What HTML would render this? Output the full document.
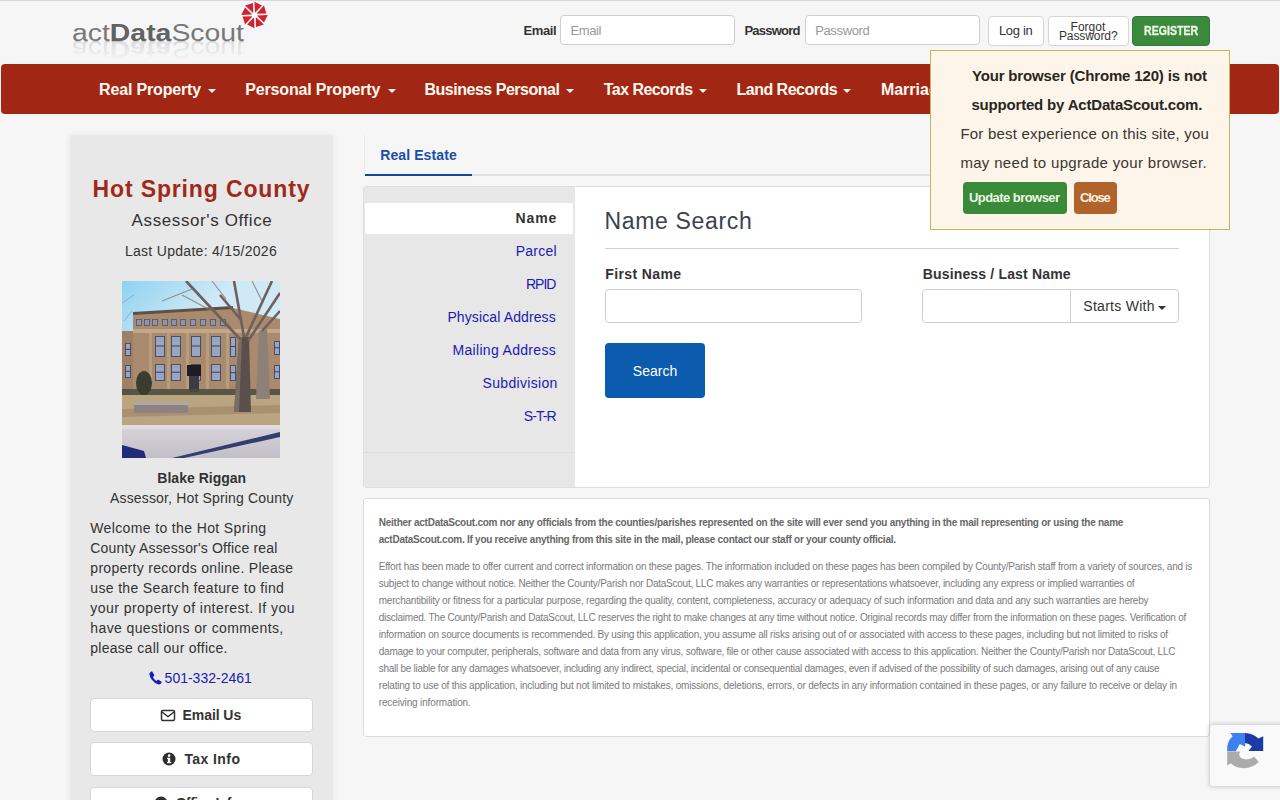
<!DOCTYPE html>
<html><head><meta charset="utf-8"><title>actDataScout</title>
<style>

html,body{margin:0;padding:0;}
body{width:1280px;height:800px;overflow:hidden;position:relative;background:#f6f6f6;font-family:"Liberation Sans",sans-serif;}
.b{position:absolute;box-sizing:border-box;}
.topline{left:0;top:0;width:1280px;height:1px;background:#ded4d7;}
.inp{background:#fff;border:1px solid #cfcfcf;border-radius:4px;}
.btnw{background:#fff;border:1px solid #d6d6d6;border-radius:4px;}
.nav{left:1px;top:64px;width:1278px;height:50px;background:#a12714;border-radius:4px;}
.caret{position:absolute;width:0;height:0;border-left:4px solid transparent;border-right:4px solid transparent;border-top:4px solid #fff8f0;}
.side{left:70px;top:135px;width:263px;height:700px;background:#e8e8e8;border-radius:3px;box-shadow:0 0 6px rgba(0,0,0,0.07);}
.panel{left:363px;top:186px;width:847px;height:302px;background:#fff;border:1px solid #dedede;border-radius:3px;overflow:hidden;}
.lcol{left:0;top:0;width:211px;height:302px;background:#e7e7e7;}
.disc{left:363px;top:498px;width:847px;height:239px;background:#fff;border:1px solid #dcdcdc;border-radius:3px;}
.popup{left:930px;top:50px;width:300px;height:180px;background:#fdf5ea;border:1px solid #c2b55c;z-index:10;}

.t{position:absolute;white-space:pre;line-height:1;font-family:"Liberation Sans",sans-serif;}
</style></head><body>

<div class="b topline"></div>
<!-- logo -->
<div class="b" style="left:66px;top:0;width:210px;height:62px;">
 <svg width="210" height="62" viewBox="0 0 210 62">
  <defs>
   <linearGradient id="rg" x1="0" y1="0" x2="0" y2="1">
    <stop offset="0" stop-color="#f6f6f6" stop-opacity="0.5"/>
    <stop offset="1" stop-color="#f6f6f6" stop-opacity="1"/>
   </linearGradient>
  </defs>
  <text x="6" y="41" font-family="Liberation Sans" font-size="23" fill="#787878" textLength="172" lengthAdjust="spacingAndGlyphs"><tspan>act</tspan><tspan font-weight="bold" fill="#626262">Data</tspan><tspan>Scout</tspan></text>
  <filter id="lb" x="-0.1" y="-0.3" width="1.2" height="1.6"><feGaussianBlur stdDeviation="0.7"/></filter><g transform="translate(0,82) scale(1,-1)" filter="url(#lb)">
   <text x="6" y="41" font-family="Liberation Sans" font-size="23" fill="#c4c4c4" textLength="172" lengthAdjust="spacingAndGlyphs"><tspan>act</tspan><tspan font-weight="bold">Data</tspan><tspan>Scout</tspan></text>
  </g>
  <rect x="0" y="42" width="210" height="20" fill="url(#rg)"/>
  <g transform="translate(188.5,15)"><polygon points="0.00,-13.30 7.39,-9.46 0.50,-2.35" fill="#d3222f"/><polygon points="9.40,-9.40 11.91,-1.46 2.01,-1.31" fill="#d3222f"/><polygon points="13.30,-0.00 9.46,7.39 2.35,0.50" fill="#d3222f"/><polygon points="9.40,9.40 1.46,11.91 1.31,2.01" fill="#d3222f"/><polygon points="0.00,13.30 -7.39,9.46 -0.50,2.35" fill="#d3222f"/><polygon points="-9.40,9.40 -11.91,1.46 -2.01,1.31" fill="#d3222f"/><polygon points="-13.30,0.00 -9.46,-7.39 -2.35,-0.50" fill="#d3222f"/><polygon points="-9.40,-9.40 -1.46,-11.91 -1.31,-2.01" fill="#d3222f"/><circle r="2.6" fill="#fff"/></g>
 </svg>
</div>
<!-- header form -->
<div class="b inp" style="left:560px;top:15px;width:175px;height:30px;"></div>
<div class="b inp" style="left:805px;top:15px;width:175px;height:30px;"></div>
<div class="b btnw" style="left:988px;top:16px;width:56px;height:30px;"></div>
<div class="b btnw" style="left:1048px;top:16px;width:81px;height:30px;"></div>
<div class="b" style="left:1132px;top:16px;width:78px;height:30px;background:#3b8a3b;border:1px solid #32783a;border-radius:4px;"></div>
<!-- nav -->
<div class="b nav"></div>
<div class="caret" style="left:208px;top:89px;"></div>
<div class="caret" style="left:388px;top:89px;"></div>
<div class="caret" style="left:566px;top:89px;"></div>
<div class="caret" style="left:699px;top:89px;"></div>
<div class="caret" style="left:843px;top:89px;"></div>
<!-- sidebar -->
<div class="b side"></div>
<div class="b" id="photo" style="left:122px;top:281px;width:158px;height:177px;overflow:hidden;background:#b9a27f;"><svg width="158" height="177" viewBox="0 0 158 177"><filter id="pb" x="0" y="0" width="1" height="1"><feGaussianBlur stdDeviation="0.6"/></filter><g filter="url(#pb)"><defs><linearGradient id="sky" x1="0" y1="0" x2="0.3" y2="0.35"><stop offset="0" stop-color="#8fd2f2"/><stop offset="1" stop-color="#cfe9f6"/></linearGradient><linearGradient id="walk" x1="0" y1="0" x2="0" y2="1"><stop offset="0" stop-color="#d8d4da"/><stop offset="1" stop-color="#c2bfc8"/></linearGradient></defs><rect width="158" height="177" fill="url(#sky)"/><path d="M0 22 L12 14 M2 40 L10 30" stroke="#7f98a8" stroke-width="1" opacity="0.6"/><rect x="0" y="50" width="30" height="66" fill="#9e8066"/><path d="M11 33 L111 27 L158 38 L158 116 L11 116 Z" fill="#a98a6c"/><path d="M11 31 L111 25 L111 28 L11 34 Z" fill="#5e5048"/><rect x="11" y="48" width="147" height="4" fill="#c2a888"/><rect x="14" y="38" width="6" height="7" fill="#5a6072"/><rect x="15" y="39" width="4" height="5" fill="#8894b0"/><rect x="22" y="38" width="6" height="7" fill="#5a6072"/><rect x="23" y="39" width="4" height="5" fill="#8894b0"/><rect x="30" y="38" width="6" height="7" fill="#5a6072"/><rect x="31" y="39" width="4" height="5" fill="#8894b0"/><rect x="40" y="38" width="6" height="7" fill="#5a6072"/><rect x="41" y="39" width="4" height="5" fill="#8894b0"/><rect x="49" y="38" width="6" height="7" fill="#5a6072"/><rect x="50" y="39" width="4" height="5" fill="#8894b0"/><rect x="58" y="38" width="6" height="7" fill="#5a6072"/><rect x="59" y="39" width="4" height="5" fill="#8894b0"/><rect x="68" y="38" width="6" height="7" fill="#5a6072"/><rect x="69" y="39" width="4" height="5" fill="#8894b0"/><rect x="78" y="38" width="6" height="7" fill="#5a6072"/><rect x="79" y="39" width="4" height="5" fill="#8894b0"/><rect x="88" y="38" width="6" height="7" fill="#5a6072"/><rect x="89" y="39" width="4" height="5" fill="#8894b0"/><rect x="98" y="38" width="6" height="7" fill="#5a6072"/><rect x="99" y="39" width="4" height="5" fill="#8894b0"/><rect x="33" y="55" width="10" height="21" fill="#4a5064"/><rect x="34" y="56" width="8" height="19" fill="#98a6c4"/><rect x="33" y="64.5" width="10" height="1" fill="#3e4454"/><rect x="33" y="83" width="10" height="17" fill="#4a5064"/><rect x="34" y="84" width="8" height="15" fill="#98a6c4"/><rect x="33" y="90.7" width="10" height="1" fill="#3e4454"/><rect x="49" y="55" width="10" height="21" fill="#4a5064"/><rect x="50" y="56" width="8" height="19" fill="#98a6c4"/><rect x="49" y="64.5" width="10" height="1" fill="#3e4454"/><rect x="49" y="83" width="10" height="17" fill="#4a5064"/><rect x="50" y="84" width="8" height="15" fill="#98a6c4"/><rect x="49" y="90.7" width="10" height="1" fill="#3e4454"/><rect x="69" y="55" width="10" height="21" fill="#4a5064"/><rect x="70" y="56" width="8" height="19" fill="#98a6c4"/><rect x="69" y="64.5" width="10" height="1" fill="#3e4454"/><rect x="69" y="83" width="10" height="17" fill="#4a5064"/><rect x="70" y="84" width="8" height="15" fill="#98a6c4"/><rect x="69" y="90.7" width="10" height="1" fill="#3e4454"/><rect x="89" y="55" width="10" height="21" fill="#4a5064"/><rect x="90" y="56" width="8" height="19" fill="#98a6c4"/><rect x="89" y="64.5" width="10" height="1" fill="#3e4454"/><rect x="89" y="83" width="10" height="17" fill="#4a5064"/><rect x="90" y="84" width="8" height="15" fill="#98a6c4"/><rect x="89" y="90.7" width="10" height="1" fill="#3e4454"/><rect x="108" y="56" width="6" height="20" fill="#4a5064"/><rect x="109" y="57" width="4" height="18" fill="#98a6c4"/><rect x="108" y="65.0" width="6" height="1" fill="#3e4454"/><rect x="108" y="84" width="6" height="16" fill="#4a5064"/><rect x="109" y="85" width="4" height="14" fill="#98a6c4"/><rect x="108" y="91.2" width="6" height="1" fill="#3e4454"/><rect x="3" y="62" width="6" height="13" fill="#4a5064"/><rect x="4" y="63" width="4" height="11" fill="#98a6c4"/><rect x="3" y="67.8" width="6" height="1" fill="#3e4454"/><rect x="3" y="84" width="6" height="13" fill="#4a5064"/><rect x="4" y="85" width="4" height="11" fill="#98a6c4"/><rect x="3" y="89.8" width="6" height="1" fill="#3e4454"/><rect x="152" y="60" width="6" height="14" fill="#4a5064"/><rect x="153" y="61" width="4" height="12" fill="#98a6c4"/><rect x="152" y="66.3" width="6" height="1" fill="#3e4454"/><rect x="152" y="84" width="6" height="14" fill="#4a5064"/><rect x="153" y="85" width="4" height="12" fill="#98a6c4"/><rect x="152" y="90.3" width="6" height="1" fill="#3e4454"/><rect x="27" y="52" width="3" height="62" fill="#c0a484" opacity="0.7"/><rect x="45" y="52" width="3" height="62" fill="#c0a484" opacity="0.7"/><rect x="64" y="52" width="3" height="62" fill="#c0a484" opacity="0.7"/><rect x="84" y="52" width="3" height="62" fill="#c0a484" opacity="0.7"/><rect x="104" y="52" width="3" height="62" fill="#c0a484" opacity="0.7"/><rect x="65" y="84" width="14" height="11" fill="#1e1e22"/><rect x="67" y="95" width="10" height="16" fill="#3a3a44"/><rect x="0" y="108" width="158" height="8" fill="#4a4a40" opacity="0.85"/><ellipse cx="22" cy="102" rx="8" ry="12" fill="#3a3a30"/><rect x="0" y="114" width="158" height="31" fill="#bba581"/><path d="M0 128 L158 124 L158 132 L0 136 Z" fill="#9c8466" opacity="0.6"/><rect x="12" y="121" width="54" height="11" fill="#8c8282"/><rect x="12" y="121" width="54" height="3" fill="#b0a8a6"/><path d="M134 118 L137 50 L145 48 L148 118 Z" fill="#8c8078"/><path d="M112 131 L117 56 L127 56 L129 131 Z" fill="#5a504c"/><path d="M112 131 L117 56 L120 56 L117 131 Z" fill="#857870" opacity="0.7"/><path d="M118 58 L64 0 M122 56 L112 0 M124 56 L150 0 M126 60 L158 12 M120 40 L98 14 M140 50 L158 30" stroke="#6e605c" stroke-width="2.6" fill="none"/><path d="M90 30 L60 14 M104 18 L90 0 M140 20 L130 0 M70 8 L40 20" stroke="#8a7a78" stroke-width="1.2" fill="none" opacity="0.8"/><rect x="0" y="144" width="158" height="33" fill="url(#walk)"/><rect x="0" y="144" width="158" height="4" fill="#e0dce2"/><path d="M50 177 L158 151 L158 156 L62 177 Z" fill="#343c70"/><path d="M0 164 L22 170 L24 177 L0 177 Z" fill="#232a7a"/></g></svg></div>
<div class="b btnw" style="left:90px;top:698px;width:223px;height:34px;"></div>
<div class="b btnw" style="left:90px;top:742px;width:223px;height:34px;"></div>
<div class="b btnw" style="left:90px;top:787px;width:223px;height:34px;"></div>
<!-- tabs -->
<div class="b" style="left:472px;top:174px;width:738px;height:2px;background:#e0e0e0;"></div>
<div class="b" style="left:364px;top:135px;width:1px;height:40px;background:#e9e9e9;"></div>
<div class="b" style="left:365px;top:174px;width:107px;height:2px;background:#0d47a1;"></div>
<!-- main panel -->
<div class="b panel">
 <div class="b lcol"></div>
 <div class="b" style="left:1px;top:16px;width:208px;height:31px;background:#fff;border-radius:2px;"></div>
 <div class="b" style="left:0;top:265px;width:211px;height:1px;background:#dcdcdc;"></div>
</div>
<div class="b" style="left:605px;top:248px;width:574px;height:1px;background:#d0d0d0;"></div>
<div class="b inp" style="left:605px;top:289px;width:257px;height:34px;"></div>
<div class="b inp" style="left:922px;top:289px;width:257px;height:34px;"></div>
<div class="b" style="left:1070px;top:290px;width:1px;height:32px;background:#d0d0d0;"></div>
<div class="caret" style="left:1158px;top:306px;border-top-color:#333;border-left-width:4px;border-right-width:4px;"></div>
<div class="b" style="left:605px;top:343px;width:100px;height:55px;background:#0b5bae;border-radius:4px;"></div>
<!-- disclaimer -->
<div class="b disc"></div>
<!-- popup -->
<div class="b popup"></div>
<div class="b" style="left:963px;top:182px;width:104px;height:32px;background:#3b8a3a;border-radius:4px;z-index:11;"></div>
<div class="b" style="left:1074px;top:182px;width:43px;height:32px;background:#b0632a;border-radius:4px;z-index:11;"></div>

<!-- icons -->
<svg class="b" style="left:149px;top:671px;" width="13" height="14" viewBox="0 0 13 14"><path d="M3.2 0.6 L5.2 3.8 Q5.5 4.4 5 4.9 L3.9 5.9 Q4.9 8.6 7.3 10.1 L8.4 9 Q8.9 8.5 9.5 8.8 L12.5 10.8 Q12.9 11.2 12.6 11.7 L11.4 13.1 Q10.8 13.7 9.8 13.5 Q5.5 12.4 2.6 8.4 Q0.6 5.5 0.4 3.2 Q0.3 2.3 0.9 1.7 L2.3 0.5 Q2.8 0.1 3.2 0.6 Z" fill="#1b1bc8"/></svg>
<svg class="b" style="left:160px;top:709px;" width="16" height="13" viewBox="0 0 16 13"><rect x="1.5" y="1.5" width="13" height="10" rx="1.2" fill="none" stroke="#333" stroke-width="1.5"/><path d="M2 3 L8 7.6 L14 3" fill="none" stroke="#333" stroke-width="1.5"/></svg>
<svg class="b" style="left:162px;top:752px;" width="14" height="14" viewBox="0 0 14 14"><circle cx="7" cy="7" r="6.5" fill="#2d2d2d"/><rect x="5.9" y="5.8" width="2.3" height="5" fill="#fff"/><rect x="5" y="10" width="4.2" height="1.2" fill="#fff"/><rect x="5" y="5.8" width="2" height="1.1" fill="#fff"/><circle cx="7.1" cy="3.6" r="1.3" fill="#fff"/></svg>
<svg class="b" style="left:154px;top:796px;" width="14" height="14" viewBox="0 0 14 14"><circle cx="7" cy="7" r="6.5" fill="#2d2d2d"/></svg>
<svg class="b" style="left:1222px;top:728px;z-index:21;" width="46" height="46" viewBox="0 0 46 46">
 <path d="M5.2 23.3 L5.2 19 Q6 12.5 10.6 8.2 L8.4 4.9 L23.2 4.9 L23.2 18.8 L17.8 16 L13.8 23.3 Z" fill="#3f80ec"/>
 <path d="M23 4.9 Q31 5 36.4 10.6 L41.2 8.2 L41.2 22.9 L26.4 22.9 L30 18.4 Q27 15.4 23 15 Z" fill="#1c3aa6"/>
 <path d="M5.2 23.5 L18.4 23.5 Q15.6 27 19 30 Q25.5 33.3 32.2 28.8 L36.8 33.9 Q30 40.6 21 40.1 Q13 39.6 9 35.2 L5.2 37.6 Z" fill="#ababab"/>
</svg>

<!-- recaptcha -->
<div class="b" style="left:1210px;top:725px;width:80px;height:61px;background:#f9f9f9;border-radius:3px;box-shadow:0 0 4px 1px rgba(0,0,0,0.18);z-index:20;"></div>

<div class="t" id="h_email" style="left:523.50px;top:24.00px;font-size:13px;font-weight:bold;color:#333;letter-spacing:-0.393px;">Email</div><div class="t" id="h_emailph" style="left:570.50px;top:24.00px;font-size:13px;font-weight:normal;color:#999;letter-spacing:-0.430px;">Email</div><div class="t" id="h_pw" style="left:744.40px;top:24.00px;font-size:13px;font-weight:bold;color:#333;letter-spacing:-0.753px;">Password</div><div class="t" id="h_pwph" style="left:815.20px;top:24.00px;font-size:13px;font-weight:normal;color:#999;letter-spacing:-0.364px;">Password</div><div class="t" id="h_login" style="left:998.90px;top:24.30px;font-size:13px;font-weight:normal;color:#333;letter-spacing:-0.318px;">Log in</div><div class="t" id="h_forgot1" style="left:1070.60px;top:20.64px;font-size:12px;font-weight:normal;color:#333;letter-spacing:0.010px;">Forgot</div><div class="t" id="h_forgot2" style="left:1058.90px;top:29.64px;font-size:12px;font-weight:normal;color:#333;letter-spacing:-0.086px;">Password?</div><div class="t" id="h_reg" style="left:1143.80px;top:24.30px;font-size:13px;font-weight:bold;color:#eef5e6;letter-spacing:0.000px;transform:scaleX(0.8156);transform-origin:0.00px 0;-webkit-text-stroke:0.35px #eef5e6;">REGISTER</div><div class="t" id="n1" style="left:99.00px;top:81.96px;font-size:16px;font-weight:bold;color:#fff8f0;letter-spacing:-0.158px;">Real Property</div><div class="t" id="n2" style="left:245.25px;top:81.96px;font-size:16px;font-weight:bold;color:#fff8f0;letter-spacing:-0.167px;">Personal Property</div><div class="t" id="n3" style="left:424.50px;top:81.96px;font-size:16px;font-weight:bold;color:#fff8f0;letter-spacing:-0.483px;">Business Personal</div><div class="t" id="n4" style="left:603.75px;top:81.96px;font-size:16px;font-weight:bold;color:#fff8f0;letter-spacing:-0.545px;">Tax Records</div><div class="t" id="n5" style="left:736.50px;top:81.96px;font-size:16px;font-weight:bold;color:#fff8f0;letter-spacing:-0.508px;">Land Records</div><div class="t" id="n6" style="left:880.90px;top:81.96px;font-size:16px;font-weight:bold;color:#fff8f0;letter-spacing:0.000px;">Marriage License</div><div class="t" id="s_county" style="left:92.50px;top:177.73px;font-size:23px;font-weight:bold;color:#a02a17;letter-spacing:0.866px;">Hot Spring County</div><div class="t" id="s_office" style="left:131.60px;top:211.86px;font-size:17px;font-weight:normal;color:#333;letter-spacing:0.605px;">Assessor&#x27;s Office</div><div class="t" id="s_update" style="left:124.90px;top:243.85px;font-size:14px;font-weight:normal;color:#333;letter-spacing:0.297px;">Last Update: 4/15/2026</div><div class="t" id="s_name" style="left:157.30px;top:471.05px;font-size:14px;font-weight:bold;color:#333;letter-spacing:0.015px;">Blake Riggan</div><div class="t" id="s_title" style="left:110.00px;top:490.90px;font-size:14px;font-weight:normal;color:#333;letter-spacing:0.163px;">Assessor, Hot Spring County</div><div class="t" id="s_p1" style="left:90.30px;top:520.90px;font-size:14px;font-weight:normal;color:#333;letter-spacing:0.364px;">Welcome to the Hot Spring</div><div class="t" id="s_p2" style="left:90.30px;top:540.90px;font-size:14px;font-weight:normal;color:#333;letter-spacing:0.174px;">County Assessor&#x27;s Office real</div><div class="t" id="s_p3" style="left:90.30px;top:560.90px;font-size:14px;font-weight:normal;color:#333;letter-spacing:0.300px;">property records online. Please</div><div class="t" id="s_p4" style="left:90.30px;top:580.90px;font-size:14px;font-weight:normal;color:#333;letter-spacing:0.342px;">use the Search feature to find</div><div class="t" id="s_p5" style="left:90.30px;top:600.90px;font-size:14px;font-weight:normal;color:#333;letter-spacing:0.447px;">your property of interest. If you</div><div class="t" id="s_p6" style="left:90.30px;top:620.90px;font-size:14px;font-weight:normal;color:#333;letter-spacing:0.385px;">have questions or comments,</div><div class="t" id="s_p7" style="left:90.30px;top:640.90px;font-size:14px;font-weight:normal;color:#333;letter-spacing:0.269px;">please call our office.</div><div class="t" id="s_phone" style="left:164.60px;top:671.15px;font-size:14px;font-weight:normal;color:#1b1bb3;letter-spacing:0.000px;">501-332-2461</div><div class="t" id="s_b1" style="left:182.60px;top:708.15px;font-size:14px;font-weight:bold;color:#333;letter-spacing:-0.079px;">Email Us</div><div class="t" id="s_b2" style="left:184.40px;top:752.15px;font-size:14px;font-weight:bold;color:#333;letter-spacing:0.417px;">Tax Info</div><div class="t" id="s_b3" style="left:175.70px;top:796.15px;font-size:14px;font-weight:bold;color:#333;letter-spacing:-0.537px;">Office Info</div><div class="t" id="t_re" style="left:380.25px;top:148.15px;font-size:14px;font-weight:bold;color:#1a4ea6;letter-spacing:0.095px;">Real Estate</div><div class="t" id="l_name" style="left:515.50px;top:211.15px;font-size:14px;font-weight:bold;color:#333;letter-spacing:0.885px;">Name</div><div class="t" id="l_parcel" style="left:515.80px;top:243.75px;font-size:14px;font-weight:normal;color:#1b1bb3;letter-spacing:0.226px;">Parcel</div><div class="t" id="l_rpid" style="left:525.90px;top:276.90px;font-size:14px;font-weight:normal;color:#1b1bb3;letter-spacing:-0.979px;">RPID</div><div class="t" id="l_phys" style="left:447.40px;top:309.75px;font-size:14px;font-weight:normal;color:#1b1bb3;letter-spacing:0.115px;">Physical Address</div><div class="t" id="l_mail" style="left:452.50px;top:342.75px;font-size:14px;font-weight:normal;color:#1b1bb3;letter-spacing:0.314px;">Mailing Address</div><div class="t" id="l_subd" style="left:482.60px;top:375.75px;font-size:14px;font-weight:normal;color:#1b1bb3;letter-spacing:0.309px;">Subdivision</div><div class="t" id="l_str" style="left:523.80px;top:409.35px;font-size:14px;font-weight:normal;color:#1b1bb3;letter-spacing:-0.935px;">S-T-R</div><div class="t" id="c_head" style="left:604.40px;top:209.53px;font-size:23px;font-weight:normal;color:#3b4250;letter-spacing:0.667px;">Name Search</div><div class="t" id="c_first" style="left:605.20px;top:266.95px;font-size:14px;font-weight:bold;color:#333;letter-spacing:0.392px;">First Name</div><div class="t" id="c_bus" style="left:922.70px;top:266.75px;font-size:14px;font-weight:bold;color:#333;letter-spacing:0.166px;">Business / Last Name</div><div class="t" id="c_starts" style="left:1083.30px;top:298.95px;font-size:14px;font-weight:normal;color:#333;letter-spacing:0.283px;">Starts With</div><div class="t" id="c_search" style="left:632.80px;top:364.05px;font-size:14px;font-weight:normal;color:#fff;letter-spacing:0.046px;">Search</div><div class="t" id="p1" style="left:971.90px;top:68.00px;font-size:15px;font-weight:bold;color:#2a2622;letter-spacing:-0.151px;z-index:12;">Your browser (Chrome 120) is not</div><div class="t" id="p2" style="left:971.40px;top:96.50px;font-size:15px;font-weight:bold;color:#2a2622;letter-spacing:-0.180px;z-index:12;">supported by ActDataScout.com.</div><div class="t" id="p3" style="left:960.40px;top:126.05px;font-size:15px;font-weight:normal;color:#3a3632;letter-spacing:0.211px;z-index:12;">For best experience on this site, you</div><div class="t" id="p4" style="left:960.40px;top:154.90px;font-size:15px;font-weight:normal;color:#3a3632;letter-spacing:0.322px;z-index:12;">may need to upgrade your browser.</div><div class="t" id="p_upd" style="left:969.00px;top:190.90px;font-size:13px;font-weight:bold;color:#eaf6e0;letter-spacing:-0.553px;z-index:12;">Update browser</div><div class="t" id="p_close" style="left:1080.00px;top:190.90px;font-size:13px;font-weight:bold;color:#fcf0e0;letter-spacing:-1.168px;z-index:12;">Close</div><div class="t" id="d_b1" style="left:378.75px;top:517.63px;font-size:10px;font-weight:bold;color:#686868;letter-spacing:-0.249px;">Neither actDataScout.com nor any officials from the counties/parishes represented on the site will ever send you anything in the mail representing or using the name</div><div class="t" id="d_b2" style="left:378.75px;top:534.63px;font-size:10px;font-weight:bold;color:#686868;letter-spacing:-0.255px;">actDataScout.com. If you receive anything from this site in the mail, please contact our staff or your county official.</div><div class="t" id="d_1" style="left:378.75px;top:562.13px;font-size:10px;font-weight:normal;color:#7b7b7b;letter-spacing:-0.227px;">Effort has been made to offer current and correct information on these pages. The information included on these pages has been compiled by County/Parish staff from a variety of sources, and is</div><div class="t" id="d_2" style="left:378.75px;top:579.13px;font-size:10px;font-weight:normal;color:#7b7b7b;letter-spacing:-0.238px;">subject to change without notice. Neither the County/Parish nor DataScout, LLC makes any warranties or representations whatsoever, including any express or implied warranties of</div><div class="t" id="d_3" style="left:378.75px;top:596.13px;font-size:10px;font-weight:normal;color:#7b7b7b;letter-spacing:-0.210px;">merchantibility or fitness for a particular purpose, regarding the quality, content, completeness, accuracy or adequacy of such information and data and any such warranties are hereby</div><div class="t" id="d_4" style="left:378.75px;top:613.13px;font-size:10px;font-weight:normal;color:#7b7b7b;letter-spacing:-0.243px;">disclaimed. The County/Parish and DataScout, LLC reserves the right to make changes at any time without notice. Original records may differ from the information on these pages. Verification of</div><div class="t" id="d_5" style="left:378.75px;top:630.13px;font-size:10px;font-weight:normal;color:#7b7b7b;letter-spacing:-0.235px;">information on source documents is recommended. By using this application, you assume all risks arising out of or associated with access to these pages, including but not limited to risks of</div><div class="t" id="d_6" style="left:378.75px;top:647.13px;font-size:10px;font-weight:normal;color:#7b7b7b;letter-spacing:-0.246px;">damage to your computer, peripherals, software and data from any virus, software, file or other cause associated with access to this application. Neither the County/Parish nor DataScout, LLC</div><div class="t" id="d_7" style="left:378.75px;top:664.13px;font-size:10px;font-weight:normal;color:#7b7b7b;letter-spacing:-0.266px;">shall be liable for any damages whatsoever, including any indirect, special, incidental or consequential damages, even if advised of the possibility of such damages, arising out of any cause</div><div class="t" id="d_8" style="left:378.75px;top:681.13px;font-size:10px;font-weight:normal;color:#7b7b7b;letter-spacing:-0.196px;">relating to use of this application, including but not limited to mistakes, omissions, deletions, errors, or defects in any information contained in these pages, or any failure to receive or delay in</div><div class="t" id="d_9" style="left:378.75px;top:698.13px;font-size:10px;font-weight:normal;color:#7b7b7b;letter-spacing:-0.144px;">receiving information.</div>
</body></html>
